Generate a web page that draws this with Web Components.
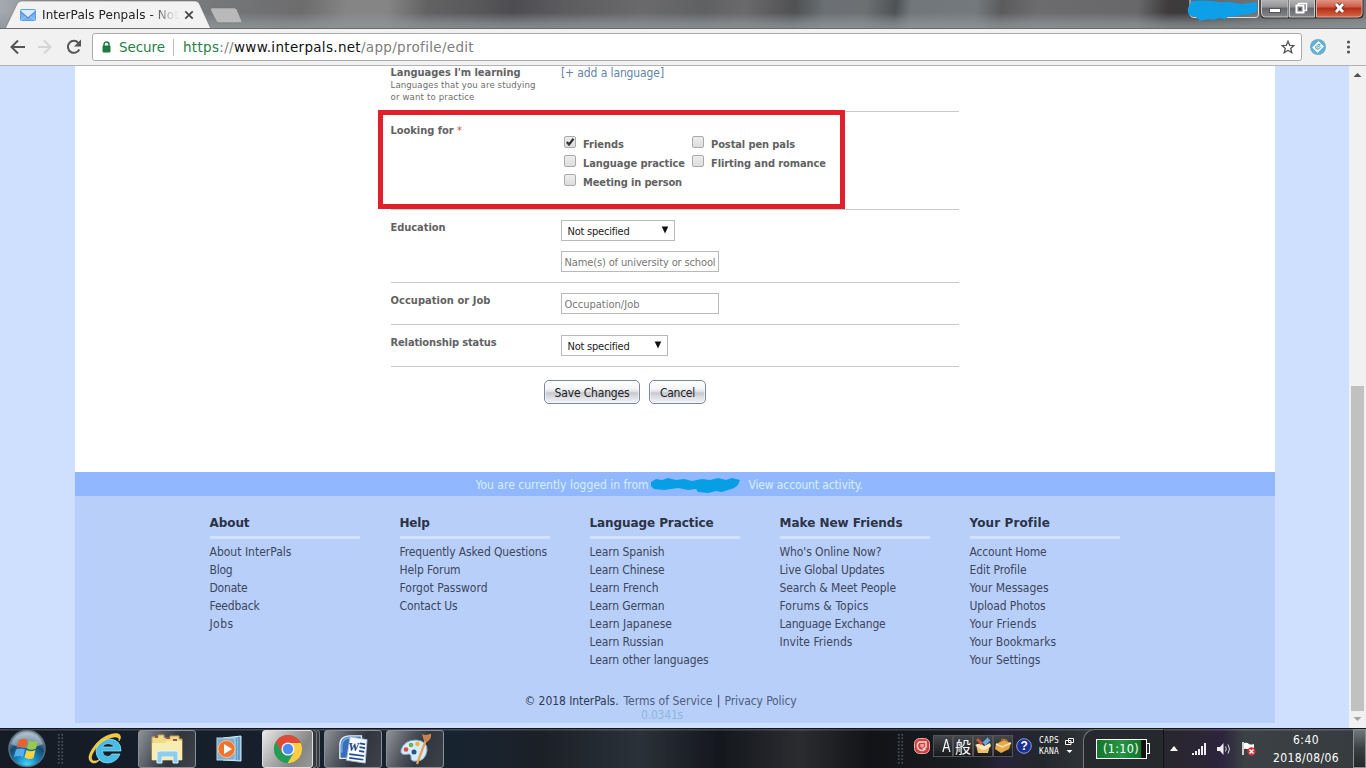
<!DOCTYPE html>
<html lang="en">
<head>
<meta charset="utf-8">
<title>InterPals Penpals</title>
<style>
html,body{margin:0;padding:0}
body{width:1366px;height:768px;overflow:hidden;font-family:"DejaVu Sans Condensed","DejaVu Sans","Noto Sans CJK JP",sans-serif;font-stretch:condensed;font-size:12px;color:#333}
</style>
</head>
<body>
<desktop-screen></desktop-screen>
<script>
function define(name, html, extra) {
  const tpl = document.createElement('template');
  tpl.innerHTML = html;
  customElements.define(name, class extends HTMLElement {
    constructor() {
      super();
      this.attachShadow({mode: 'open'}).appendChild(tpl.content.cloneNode(true));
    }
    connectedCallback() { if (extra) extra(this, this.shadowRoot); }
  });
}

define('desktop-screen', `
<style>
:host{display:flex;flex-direction:column;width:1366px;height:768px;overflow:hidden;background:#cfdffe}
profile-page{flex:1;min-height:0}
</style>
<tab-strip></tab-strip><browser-toolbar></browser-toolbar><profile-page></profile-page><task-bar></task-bar>`);

define('tab-strip', `
<style>
:host{display:flex;height:29px;flex:none;position:relative;overflow:hidden;border-bottom:1px solid #6a6a6e;box-sizing:border-box;
background:linear-gradient(#0000 0 45%,#8f979a99 80%,#8f9799cc),linear-gradient(97deg,#a5aab0 0,#8f9397 40px,#77787a 210px,#6c6c6d 300px,#858585 345px,#858585 385px,#626263 425px,#59595b 470px,#4d4d51 510px,#5c5b5e 560px,#6a6a6d 640px,#606163 700px,#6a696b 740px,#505153 790px,#6b7074 820px,#6d7073 860px,#4f5255 890px,#70777b 905px,#74797d 970px,#5b5b5c 995px,#6c6c6e 1030px,#68686a 1130px,#3d3b3c 1160px,#3c3c3c 1190px,#59595b 1250px,#777 1366px)}
.tab{width:217px;height:29px;position:relative;flex:none}
.shape{position:absolute;left:0;top:0}
.in{position:relative;display:flex;align-items:center;height:30px;padding-left:20px;color:#222}
.title{display:block;width:138px;margin-left:6px;overflow:hidden;-webkit-mask-image:linear-gradient(90deg,#000 108px,#0001 133px);mask-image:linear-gradient(90deg,#000 108px,#0001 133px);font-family:"DejaVu Sans",sans-serif;font-stretch:normal;font-size:12px;line-height:18px}
.x{margin-left:4px}
.nt{position:absolute;left:209px;top:7px}
.scr{position:absolute;left:1186px;top:0}
.win{position:absolute;left:1260px;top:0}
</style>
<div class="tab">
<svg class="shape" width="217" height="29"><path d="M5 29L17 4Q18.500 1 21 1H195Q198 1 199.500 4L211 29Z" fill="#f2f2f2" stroke="#6668" stroke-width="1"/></svg>
<div class="in">
<svg width="16" height="12" viewBox="0 0 16 12"><rect x=".5" y=".5" width="15" height="11" rx="1" fill="#78b2ef" stroke="#5c9fe5"/><path d="M1 1H15L14 4L8 9L2 4Z" fill="#d8ebff"/><path d="M1 3L8 9L15 3" fill="none" stroke="#4b8edd" stroke-width="1.200"/><path d="M1 11L6 7.500M15 11L10 7.500" stroke="#9bcaf7"/></svg>
<div class="title"><fit-text w="137">InterPals Penpals - Not</fit-text></div>
<svg class="x" width="10" height="10"><path d="M1.300 1.300L8.700 8.700M8.700 1.300L1.300 8.700" stroke="#444" stroke-width="1.700"/></svg>
</div></div>
<svg class="nt" width="36" height="18"><path d="M3 1H25Q27 1 28 3L32.500 13.500Q33.500 15.800 31 15.800H10Q8 15.800 7 13.500L1.500 3Q1.500 1 3 1Z" fill="#b9b9b9" stroke="#6b6b6b80"/></svg>
<svg class="scr" width="76" height="24"><path d="M4 -1V14Q4 17.500 9 17.500H70Q72.500 17.500 72.500 14V-1" fill="#8888" stroke="#ddd"/><path d="M5 1Q14 0 28 1Q34 3 41 1.500L56 4L70 2Q72 6 70.500 12Q66 13 62 14.500Q52 15 46 17L42 16L40 19L33 18L28 20L22 19L14 21L10 17L3 15Q0 8 4 5Z" fill="#0d9fe8"/></svg>
<svg class="win" width="106" height="20">
<defs><linearGradient id="g" x2="0" y2="1"><stop offset="0" stop-color="#b8b8b9"/><stop offset=".45" stop-color="#929294"/><stop offset=".5" stop-color="#656669"/><stop offset="1" stop-color="#858689"/></linearGradient><linearGradient id="r" x2="0" y2="1"><stop offset="0" stop-color="#e39b8b"/><stop offset=".45" stop-color="#cb5c48"/><stop offset=".5" stop-color="#b52b14"/><stop offset="1" stop-color="#d4694a"/></linearGradient></defs>
<path d="M.5 -1V14Q.5 18.500 5 18.500H99Q103.500 18.500 103.500 14V-1Z" fill="#333"/>
<path d="M1.500 -1V13Q1.500 17 5 17H28V-1Z" fill="url(#g)" stroke="#c9c9c9"/><path d="M29.500 -1H54.500V17H29.500Z" fill="url(#g)" stroke="#c9c9c9"/><path d="M56.500 -1V17H98Q102 17 102 13V-1Z" fill="url(#r)" stroke="#e0a99e"/>
<rect x="9.500" y="8.500" width="11" height="4" fill="#fff" stroke="#555"/>
<path d="M38.500 3.500H46.500V10.500H38.500Z" fill="#777" stroke="#fff" stroke-width="1.500"/><path d="M36.500 5.500H43.500V12.500H36.500Z" fill="#777" stroke="#fff" stroke-width="2"/><rect x="39" y="8" width="2" height="2" fill="#444"/>
<path d="M76 4L83 12M83 4L76 12" stroke="#61302a" stroke-width="4.600"/><path d="M76 4L83 12M83 4L76 12" stroke="#fff" stroke-width="2.800"/></svg>`);

define('browser-toolbar', `
<style>
:host{display:flex;align-items:center;height:37px;flex:none;box-sizing:border-box;background:#f2f1f2;border-bottom:1px solid #b3b3b5;padding:0 0 0 9px}
.nav{display:flex;gap:9px;width:83px;flex:none}
.omni{display:flex;align-items:center;box-sizing:border-box;width:1210px;height:28px;background:#fff;border:1px solid #aaa;border-radius:3px;padding:0 6px 0 9px;font-family:"DejaVu Sans",sans-serif;font-stretch:normal;font-size:13.500px;color:#7d7d7d;line-height:20px}
.sec{color:#278046;margin-left:8px}.sep{width:1px;height:17px;background:#bbb;margin:0 9px 0 8px}
.star{margin-left:auto}
.ext{margin-left:8px}.dots{margin-left:20px}
</style>
<div class="nav">
<svg width="18" height="18"><path d="M16 9H3M9 2.500L2.500 9L9 15.500" fill="none" stroke="#555" stroke-width="2"/></svg>
<svg width="18" height="18"><path d="M2 9H14M8 2.500L14.500 9L8 15.500" fill="none" stroke="#d5d5d5" stroke-width="2"/></svg>
<svg width="20" height="18" viewBox="0 0 20 18" style="margin-left:1px"><path d="M15.300 11.500A6 6 0 1 1 14.400 4.800" fill="none" stroke="#555" stroke-width="2"/><path d="M17 1.500V8.500H10Z" fill="#555"/></svg>
</div>
<div class="omni">
<svg width="9" height="12"><path d="M2 5.500V3.500A2.400 2.400 0 0 1 7 3.500V5.500" fill="none" stroke="#1e7a3e" stroke-width="1.500"/><rect x=".5" y="4.500" width="8" height="7" rx="1" fill="#1e7a3e"/></svg>
<fit-text class="sec" w="46">Secure</fit-text><i class="sep"></i><fit-text w="291"><span style="color:#278046">https</span>://<span style="color:#111">www.interpals.net</span>/app/profile/edit</fit-text>
<svg class="star" width="14" height="14" viewBox="0 0 14 14"><path d="M7 1.200L8.700 5.300L13 5.600L9.700 8.400L10.800 12.700L7 10.300L3.200 12.700L4.300 8.400L1 5.600L5.300 5.300Z" fill="none" stroke="#555" stroke-width="1.300"/></svg>
</div>
<svg class="ext" width="16" height="16"><circle cx="8" cy="8" r="8" fill="#67afd2"/><path d="M8.500 2.500L13.500 7.500L7.500 13.500L2.500 8.500Z" fill="#e7f5fc" stroke="#e7f5fc" stroke-linejoin="round"/><path d="M10.500 5.500L8 5.500L5.500 8Q6 11 8.500 10L11 7.500M7 8.500L10 6.500" fill="none" stroke="#539fc5" stroke-width="1"/></svg>
<svg class="dots" width="6" height="16"><circle cx="2.500" cy="3" r="1.600" fill="#555"/><circle cx="2.500" cy="8" r="1.600" fill="#555"/><circle cx="2.500" cy="13" r="1.600" fill="#555"/></svg>`);

define('profile-page', `
<style>
:host{display:flex;background:#cfdffe;overflow:hidden}
.sheet{width:1200px;margin-left:75px;height:657px;background:#fff;display:flex;flex-direction:column}
profile-form{height:406px;flex:none}
site-footer{flex:1}
scroll-track{margin-left:auto}
</style>
<div class="sheet"><profile-form></profile-form><site-footer></site-footer></div><scroll-track></scroll-track>`);

define('scroll-track', `
<style>:host{display:flex;flex-direction:column;width:17px;background:#f1f1f1}
svg{display:block}.thumb{flex:none;height:325px;width:13px;margin-left:2px;background:#c1c1c1}.gap{flex:none;height:303px}</style>
<svg width="17" height="17"><path d="M4.500 11H12.500L8.500 7Z" fill="#505050"/></svg><div class="gap"></div><div class="thumb"></div><svg width="17" height="17"><path d="M4.500 6H12.500L8.500 10Z" fill="#a3a3a3"/></svg>`);

define('form-row', `
<style>
:host{display:flex;box-sizing:border-box;width:568px;border-bottom:1px solid #c8c8c8;flex:none}
.l{width:170px;flex:none;font:bold 11px/14px "DejaVu Sans Condensed","DejaVu Sans",sans-serif;font-stretch:condensed;color:#626262;padding-top:var(--lt,11px)}
.l ::slotted(*){margin-left:-.5px}
.f{padding-top:var(--ft,10px);flex:1;display:flex;flex-direction:column;align-items:flex-start}
</style><div class="l"><slot name="label"></slot></div><div class="f"><slot></slot></div>`);

define('check-item', `
<style>:host{display:flex;align-items:flex-start;height:19px;font-weight:bold;font-size:11px;line-height:16px;color:#626262}
svg{display:block;flex:none;margin:-.5px 7px 0 0}.t{display:block;padding-top:1px}svg .m{display:none}:host([checked]) .m{display:block}</style>
<svg width="12" height="12"><defs><linearGradient id="c" x2="0" y2="1"><stop offset="0" stop-color="#eee"/><stop offset="1" stop-color="#dcdcdc"/></linearGradient></defs><rect x=".5" y=".5" width="11" height="11" rx="1.500" fill="url(#c)" stroke="#aaa"/><path class="m" d="M2.800 6L5 8.500L9.500 2.800" fill="none" stroke="#333" stroke-width="2.200"/></svg><span class="t"><slot></slot></span>`);

define('pick-box', `
<style>:host{display:flex;align-items:center;box-sizing:border-box;width:var(--w);height:21px;border:1px solid #b9b9b9;background:#fff;padding:1px 5px 0 5.500px;font-size:11px;line-height:15px;color:#222}
svg{margin-left:auto;margin-top:-3px}</style><slot></slot><svg width="8" height="8"><path d="M.7 .5H7.300L4 7.500Z" fill="#111"/></svg>`);

define('text-box', `
<style>:host{display:flex;align-items:center;box-sizing:border-box;width:158px;height:21px;border:1px solid #b9b9b9;background:#fff;padding:1px 3px 0 2.500px;font-size:11px;line-height:15px;color:#777}
div{overflow:hidden;width:151.500px}</style><div><slot></slot></div>`);

define('push-button', `
<style>:host{display:flex;align-items:center;justify-content:center;box-sizing:border-box;width:var(--w);height:24px;border:1px solid #78879f;border-radius:5px;background:linear-gradient(#fff 0,#f4f5f7 35%,#dfe1e5 48%,#c6c9d0 54%,#e2e4e8 80%,#f2f3f5);box-shadow:inset 0 0 0 1px #ffffff90;font-size:12px;line-height:16px;color:#222;padding-top:1px}</style><slot></slot>`);

define('profile-form', `
<style>
:host{display:flex;flex-direction:column;position:relative;padding-left:316px;box-sizing:border-box}
.sub{font-weight:normal;font-size:9.500px;line-height:12px;color:#6e6e6e;display:block}
.sub:nth-of-type(1){margin-top:-1px}
.add{font-size:12px;line-height:14px;color:#6283a8}
.checks{display:grid;grid-template-columns:128px auto;grid-template-rows:repeat(3,19px);margin-left:3px}
.req{color:#d04b4b;font-weight:normal}
.btns{display:flex;gap:9px;margin:13px 0 0 153px}
.mark{position:absolute;left:303px;top:44px;width:467px;height:99px;box-sizing:border-box;border:5px solid #e0202b}
</style>
<form-row style="height:46px;--lt:-2px;--ft:-2px"><div slot="label"><fit-text w="130">Languages I'm learning</fit-text><span class="sub"><fit-text w="145">Languages that you are studying</fit-text></span><span class="sub"><fit-text w="84">or want to practice</fit-text></span></div><fit-text class="add" w="103">[+ add a language]</fit-text></form-row>
<form-row style="height:98px;--ft:24px;--lt:12px"><div slot="label"><fit-text inline w="63">Looking for</fit-text> <span class="req">*</span></div>
<div class="checks"><check-item checked><fit-text w="41">Friends</fit-text></check-item><check-item><fit-text w="84">Postal pen pals</fit-text></check-item><check-item><fit-text w="102">Language practice</fit-text></check-item><check-item><fit-text w="115">Flirting and romance</fit-text></check-item><check-item><fit-text w="99">Meeting in person</fit-text></check-item></div></form-row>
<form-row style="height:73px"><fit-text slot="label" w="55">Education</fit-text><pick-box style="--w:114px"><fit-text w="62">Not specified</fit-text></pick-box><text-box style="margin-top:10px"><fit-text w="151">Name(s) of university or school</fit-text></text-box></form-row>
<form-row style="height:42px"><fit-text slot="label" w="100">Occupation or Job</fit-text><text-box><fit-text w="75">Occupation/Job</fit-text></text-box></form-row>
<form-row style="height:42px"><fit-text slot="label" w="106">Relationship status</fit-text><pick-box style="--w:107px"><fit-text w="62">Not specified</fit-text></pick-box></form-row>
<div class="btns"><push-button style="--w:96px"><fit-text w="75">Save Changes</fit-text></push-button><push-button style="--w:57px"><fit-text w="35">Cancel</fit-text></push-button></div>
<div class="mark"></div>`);

define('footer-column', `
<style>:host{display:block;width:150px}
.h{font-family:"DejaVu Sans",sans-serif;font-stretch:normal;font-size:12px;font-weight:bold;line-height:19px;color:#2b3345;height:22px;border-bottom:3px solid #d3e2ff;margin-bottom:4px}
.links{display:flex;flex-direction:column;line-height:18px;color:#3c465c}</style>
<div class="h"><slot name="h"></slot></div><div class="links"></div>`, (el, root) => {
  const box = root.querySelector('.links');
  if (box.childElementCount) return;
  for (const item of el.getAttribute('links').split('|')) {
    const [text, w] = item.split('~');
    const t = document.createElement('fit-text');
    t.setAttribute('w', w);
    t.textContent = text;
    box.appendChild(t);
  }
});

define('site-footer', `
<style>
:host{display:flex;flex-direction:column;background:#b8cffa}
.bar{height:24px;background:#91b8fe;display:flex;align-items:center;padding:1px 0 0 400.500px;box-sizing:border-box;color:#d7edff;line-height:16px;flex:none}
.bar svg{margin:0 8px 0 1px}
.cols{display:flex;gap:40px;padding:18px 0 0 134.500px;height:173px}
.legal{display:flex;gap:5px;padding:5px 0 0 449.500px;line-height:18px;color:#4d5d7c}
.time{line-height:12px;padding-left:566px;color:#8db8dc;margin-top:-1px}
</style>
<div class="bar"><fit-text w="173">You are currently logged in from</fit-text><svg width="91" height="18"><path d="M1 6L6 3L12 4L18 2L26 4L34 3L42 5L52 3L60 4L68 2L76 4L82 2L90 4L88 9Q84 13 78 14L72 16L66 15L58 17L48 16L46 13L38 14L28 12L14 14L4 13L1 10Z" fill="#069fe6"/></svg><fit-text w="114">View account activity.</fit-text></div>
<div class="cols">
<footer-column links="About InterPals~82|Blog~23|Donate~38|Feedback~50|Jobs~24"><fit-text slot="h" w="40">About</fit-text></footer-column>
<footer-column links="Frequently Asked Questions~147.5|Help Forum~61|Forgot Password~88|Contact Us~58"><fit-text slot="h" w="30">Help</fit-text></footer-column>
<footer-column links="Learn Spanish~75|Learn Chinese~75|Learn French~69|Learn German~75|Learn Japanese~82.5|Learn Russian~74|Learn other languages~119"><fit-text slot="h" w="124">Language Practice</fit-text></footer-column>
<footer-column links="Who's Online Now?~102|Live Global Updates~105|Search &amp; Meet People~116.5|Forums &amp; Topics~89|Language Exchange~106|Invite Friends~73"><fit-text slot="h" w="123">Make New Friends</fit-text></footer-column>
<footer-column links="Account Home~77|Edit Profile~57|Your Messages~79|Upload Photos~76|Your Friends~67|Your Bookmarks~86.5|Your Settings~71"><fit-text slot="h" w="80">Your Profile</fit-text></footer-column>
</div>
<div class="legal"><fit-text w="94" style="color:#2e3a52">© 2018 InterPals.</fit-text><fit-text w="89">Terms of Service</fit-text><span style="color:#2e3a52;width:2px;display:flex;justify-content:center">|</span><fit-text w="72">Privacy Policy</fit-text></div>
<div class="time"><fit-text w="42">0.0341s</fit-text></div>`);

define('task-button', `
<style>:host{display:flex;align-items:center;justify-content:center;box-sizing:border-box;height:38px;width:58px;flex:none}
:host([open]){border:1px solid #8b9098;border-radius:3px;background:linear-gradient(115deg,#8e9298,#51565e 35%,#30353e 60%,#3d424b)}
:host([active]){border-color:#e0e0e0;background:linear-gradient(125deg,#e9e9e9,#adadad 40%,#858585 70%,#999)}</style><slot></slot>`);

define('task-bar', `
<style>
:host{display:flex;height:40px;flex:none;box-sizing:border-box;border-top:1px solid #10151f;position:relative;color:#fff;
background:linear-gradient(#ffffff30 0 1px,#0000 2px),linear-gradient(90deg,#141b25 0,#182330 460px,#1b2027 540px,#2a3138 640px,#14171c 720px,#2b2c30 800px,#111317 870px,#1c1f24 980px,#27233a 1000px,#23272b 1040px,#33383b 1100px,#27262d 1160px,#2b2634 1200px,#2d2440 1222px,#3b4144 1245px,#353b3e 1366px)}
.left{display:flex;align-items:center;width:880px;flex:none}
.tray{display:flex;align-items:center;flex:1;position:relative}
.grip{width:7px;height:32px;background:radial-gradient(circle,#6c737ca0 .6px,#0000 1px) 0 0/3.500px 3.500px;flex:none}
.stack{width:3.500px;height:38px;box-sizing:border-box;border:1px solid #777;border-left:0;border-radius:0 3px 3px 0;background:#34383f;flex:none}
.key{display:flex;align-items:center;justify-content:center;width:20px;height:22px;background:linear-gradient(#45484c,#16181b);border:1px solid #555;box-sizing:border-box;font:16px/20px "Noto Sans CJK JP",sans-serif;font-stretch:normal}
.caps{display:flex;flex-direction:column;font:8px/11px "DejaVu Sans Mono",monospace;font-stretch:normal;width:21px}
.bat{display:flex;align-items:center;justify-content:center;width:81px;height:39px;box-sizing:border-box;border-left:1px solid #777;border-top:1px solid #777;border-top-left-radius:12px;border-right:1px solid #111;background:#25282c;flex:none}
.cell{display:flex;align-items:center;justify-content:center;width:51px;height:20px;box-sizing:border-box;border:1.500px solid #fff;background:linear-gradient(90deg,#14762b,#269543 50%,#12742b 90%,#111 91%);font-size:12.500px;position:relative;line-height:16px;margin:-1px 5px 0 0}
.cell:after{content:"";position:absolute;right:-4px;top:3px;width:2px;height:9px;border:1px solid #fff;border-left:0}
.clock{display:flex;flex-direction:column;align-items:center;position:absolute;left:393px;top:2px;font-size:12px;line-height:18px}
.peek{position:absolute;right:0;top:0;width:13px;height:39px;box-sizing:border-box;border:1px solid #8b8f92;background:linear-gradient(#71787c,#3a3f42 50%,#24282a)}
svg{flex:none;display:block}
</style>
<div class="left">
<svg width="40" height="40" style="margin-left:7px"><defs><radialGradient id="o" cx=".5" cy=".95" r=".9"><stop offset="0" stop-color="#42d8ff"/><stop offset=".35" stop-color="#1387bd"/><stop offset=".65" stop-color="#16496f"/><stop offset="1" stop-color="#9babb8"/></radialGradient></defs><circle cx="20" cy="19.500" r="18" fill="url(#o)" stroke="#5c6e80" stroke-width="1.500"/><path d="M4 15A17 17 0 0 1 36 15Q20 23 4 15Z" fill="#dce8ef70"/><path d="M12 11Q16 8.500 20.500 11L18.500 19Q14 16.500 9.500 19Z" fill="#ed602b"/><path d="M22 11.500Q26.500 14 31 11.500L29 19.500Q24.500 22 20 19.500Z" fill="#97ca47"/><path d="M9 20.500Q13 18.500 18 20.500L16 28Q12 26 7 28Z" fill="#56aef1"/><path d="M19.500 21Q23.500 23.500 28.500 21L26.500 29Q22 31 17.500 28.500Z" fill="#ffd33d"/></svg>
<div class="grip" style="margin-left:10px"></div>
<task-button style="margin-left:12px"><svg width="36" height="34" viewBox="0 0 36 34"><path d="M33 22H25Q22 26 18.500 24Q15.500 23 15.500 19H34Q34 7 21 7Q10 8 9 19Q10 31 21 31Q30 30 33 22ZM15.500 15Q16.500 11.500 21 11.500Q26 11.500 27 15Z" fill="#46bde9" stroke="#a7e8fc" stroke-width=".7"/><path d="M32 9Q33 4.500 27 5Q14 7 7 19Q2 27 6.500 29Q9 29.500 13 27.500Q8 33 4 30Q-1 26 6 16Q13 5 25 2Q34 0 33.500 6Z" fill="#f5c832" stroke="#fff08a" stroke-width=".5"/></svg></task-button>
<task-button open style="margin-left:4px"><svg width="34" height="32" viewBox="0 0 34 32"><path d="M2 6V4H8V2H14V5H20V3H29V6H32V27H2Z" fill="#eedb87" stroke="#c3a85c"/><path d="M5 4H8M16 5H20M23 7H27" stroke="#a7503e" stroke-width="2"/><path d="M2 10H15L17 8H32V27H2Z" fill="#f8edb1"/><path d="M7 30V20Q7 18 10 18H26Q28 18 28 20V30H23V24H12V30Z" fill="#8fcdea" stroke="#ddf5ff"/></svg></task-button>
<task-button style="margin-left:4px"><svg width="28" height="28" viewBox="0 0 28 28"><path d="M8 3L26 1V26L8 25Z" fill="#84b9db" stroke="#d4edfb"/><path d="M24 2V25M21 3V25" stroke="#4385b3"/><rect x="2" y="3" width="18" height="22" fill="#80aecb" stroke="#bbd9eb"/><circle cx="11.500" cy="14" r="8.500" fill="#ed7431" stroke="#ffbe86"/><path d="M9 9L17 14L9 19Z" fill="#fff"/></svg></task-button>
<task-button open active style="width:51px;margin-left:4px"><svg width="30" height="30" viewBox="0 0 32 32"><circle cx="16" cy="16" r="15" fill="#4caf50"/><path d="M3 8.500A15 15 0 0 1 29.500 9.500H16L9.500 19.500Z" fill="#df4937"/><path d="M29.500 9.500A15 15 0 0 1 15.500 31L22 19.500L18 9.500Z" fill="#ffcd42"/><path d="M3 8.500A15 15 0 0 0 15.500 31L22 20L9.500 19.500Z" fill="#249c57"/><circle cx="16" cy="16" r="7" fill="#f4f4f4"/><circle cx="16" cy="16" r="5.500" fill="#4b8bf4"/></svg></task-button><div class="stack"></div><div class="stack"></div>
<task-button open style="margin-left:4px"><svg width="32" height="30" viewBox="0 0 34 32"><path d="M3 26V12Q3 2 14 2H26V26Z" fill="#366eb9" stroke="#e6f1ff" stroke-width="1.500"/><path d="M5 20V12Q6 4 14 4" fill="none" stroke="#6aa2e0" stroke-width="2"/><path d="M14 3L32 6L30 31L10 28Z" fill="#f6faff" stroke="#a9bfd9"/><path d="M24.500 10L30 11M24 14L30 15M23.500 18L29 19M13 21.500L29 23.500M13 25.500L28 27.500" stroke="#264a89" stroke-width="1.800"/><text x="12" y="18" font-family="Liberation Serif" font-weight="bold" font-style="italic" font-size="13" fill="#203f7c">W</text></svg></task-button>
<task-button open style="margin-left:4px"><svg width="36" height="34" viewBox="0 0 36 34"><path d="M4 18Q7 8 19 8Q31 9 30 19Q28 29 20 29Q13 30 14 25Q14 21 9 22.500Q3 23 4 18Z" fill="#d9eafa" stroke="#7fa5c9"/><circle cx="9" cy="17.500" r="2.300" fill="#d64c3e"/><circle cx="14" cy="13" r="2.300" fill="#69b34d"/><circle cx="20.500" cy="12" r="2.300" fill="#e7b832"/><circle cx="17" cy="20" r="2.500" fill="#255688"/><path d="M28.500 9L20 32" stroke="#e0a45e" stroke-width="2.300"/><path d="M27 9L25 2Q29 4 34 1.500Q35 7 30 10Z" fill="#c78252"/></svg></task-button>
</div>
<div class="tray">
<div class="grip" style="margin-left:17px"></div>
<svg width="16" height="16" style="margin:-5px 3px 0 10px"><rect x=".5" y=".5" width="15" height="15" rx="5" fill="#c74447" stroke="#f1a8a4"/><path d="M5 4Q2 7 4.500 11Q8 14 11.500 11M5 4H12V9L9 11" fill="none" stroke="#ffd3ca" stroke-width="1.500"/><path d="M6.500 6H10V8.500L8 10L6 8Z" fill="#f1a099"/></svg>
<div style="display:flex;margin-top:-5px"><div class="key" style="font-family:'Liberation Sans';font-size:19px;padding-left:6px"><span style="display:block;transform:scaleX(.65)">A</span></div><div class="key"><span style="display:block;margin:0 -2px">般</span></div><div class="key"><svg width="18" height="18"><path d="M2 8L9 11L16 8L14 16H4Z" fill="#eebd6f"/><path d="M1 8Q7 5 10 9L16 6L17 9Q13 13 8 13Z" fill="#ffe8b6"/><path d="M3 2L8 7" stroke="#d3523b" stroke-width="3"/><path d="M15 2L10 7" stroke="#69a9e3" stroke-width="4"/></svg></div><div class="key"><svg width="18" height="18"><path d="M2 7L10 3L17 6L15 12L7 16L1 12Z" fill="#e6a84a"/><path d="M2 7L8 10L17 6" fill="none" stroke="#ffe2a6" stroke-width="1.500"/><path d="M7 5L8 2L13 3V5" fill="none" stroke="#c8781e"/></svg></div></div>
<svg width="16" height="16" style="margin:-5px 7px 0 3px"><circle cx="8" cy="8" r="7.300" fill="#1c318f" stroke="#90a0e0"/><text x="4.500" y="12.300" font-family="Liberation Sans" font-weight="bold" font-size="12" fill="#fff">?</text></svg>
<div class="caps" style="margin-top:-6px"><fit-text w="20">CAPS</fit-text><fit-text w="20">KANA</fit-text></div>
<svg width="9" height="20" style="margin:-5px 9px 0 5px"><path d="M3.500 2.500H8.500V6.500H3.500ZM.5 4.500H6V8.500H.5Z" fill="#222" stroke="#fff"/><path d="M1.500 14H7.500L4.500 17Z" fill="#fff"/></svg>
<div class="bat"><div class="cell"><fit-text w="36">(1:10)</fit-text></div></div>
<svg width="8" height="5" style="margin-left:6px"><path d="M0 5H8L4 0Z" fill="#fff"/></svg>
<svg width="14" height="12" style="margin-left:14px"><path d="M1 10V12M4 8V12M7 6V12M10 3V12M13 0V12" stroke="#eee" stroke-width="2"/></svg>
<svg width="15" height="14" style="margin-left:10px"><path d="M1 5H4L7.500 1V13L4 9H1Z" fill="#eee"/><path d="M9.500 4.500Q11 7 9.500 9.500M12 2.500Q15 7 12 11.500" fill="none" stroke="#ddd"/></svg>
<svg width="16" height="16" style="margin-left:10px"><path d="M2 1V14" stroke="#fff" stroke-width="1.500"/><path d="M3 2Q6 1 8 3Q10 4 13 3V9Q10 10 8 9Q6 7 3 8Z" fill="#fff"/><circle cx="10.500" cy="10.500" r="4.200" fill="#d3302f"/><path d="M8.500 8.500L12.500 12.500M12.500 8.500L8.500 12.500" stroke="#fff" stroke-width="1.500"/></svg>
<div class="clock"><fit-text w="26">6:40</fit-text><fit-text w="66">2018/08/06</fit-text></div>
<div class="peek"></div>
</div>`);

// Text run that spreads its letter spacing to fill the width given in "w".
define('fit-text', `
<style>:host{display:block;white-space:nowrap}:host([inline]){display:inline-block}span{display:inline-block}</style><span><slot></slot></span>`, (el, root) => {
  const s = root.querySelector('span');
  const w = parseFloat(el.getAttribute('w'));
  el.style.width = w + 'px';
  const natural = s.getBoundingClientRect().width;
  s.style.letterSpacing = ((w - natural) / el.textContent.length).toFixed(3) + 'px';
});
</script>
</body>
</html>
